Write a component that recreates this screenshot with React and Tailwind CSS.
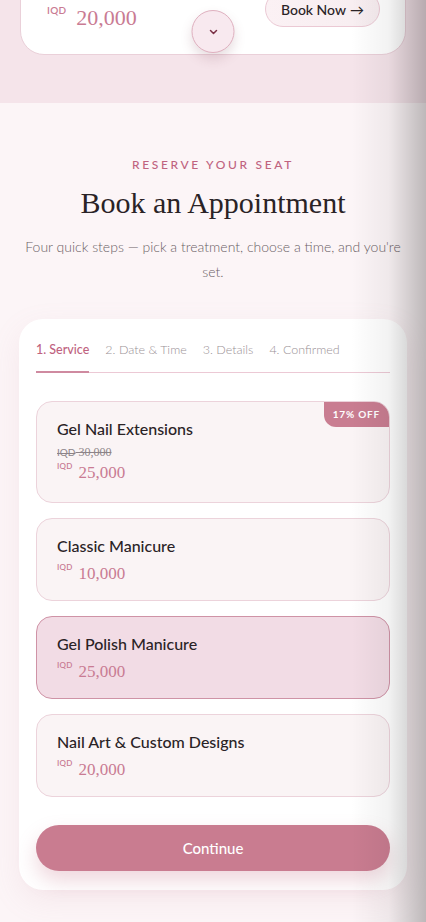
import { useState } from "react";

const services = [
  { name: "Gel Nail Extensions", price: "25,000", old: "30,000", badge: "17% OFF" },
  { name: "Classic Manicure", price: "10,000" },
  { name: "Gel Polish Manicure", price: "25,000" },
  { name: "Nail Art & Custom Designs", price: "20,000" },
];

const steps = ["1. Service", "2. Date & Time", "3. Details", "4. Confirmed"];

function Price({ value, big }) {
  return (
    <div className={`flex items-start text-[#c97b93] ${big ? "gap-[10px]" : "gap-[6px]"}`}>
      <span
        className={`${big ? "text-[10px] mt-[2px]" : "text-[8px] mt-[1px]"} font-semibold tracking-wide`}
        style={{ fontFamily: "Lato, sans-serif" }}
      >
        IQD
      </span>
      <span
        className={`${big ? "text-[22px] mt-[6px]" : "text-[17px] mt-[5px]"} leading-none`}
        style={{ fontFamily: '"Liberation Serif", serif' }}
      >
        {value}
      </span>
    </div>
  );
}

function ServiceCard({ item, selected, onClick }) {
  return (
    <button
      onClick={onClick}
      className={`relative w-full text-left rounded-[16px] border px-[20px] ${item.old ? "pt-[15px] pb-[21px]" : "pt-[15px] pb-[18px]"} ${
        selected ? "bg-[#f2dce5] border-[#cf93a6]" : "bg-[#faf4f5] border-[#ecd3db]"
      }`}
    >
      {item.badge && (
        <span className="absolute top-0 right-0 bg-[#c97d91] text-white text-[10px] font-bold tracking-[0.08em] px-[9px] py-[5px] rounded-bl-[12px] rounded-tr-[15px]">
          {item.badge}
        </span>
      )}
      <div className="text-[16px] font-medium text-[#2a2326]">{item.name}</div>
      {item.old && (
        <div className="text-[12px] text-[#8d8488] line-through mt-[2px]" style={{ fontFamily: '"Liberation Serif", serif' }}>
          <span className="text-[10px]" style={{ fontFamily: "Lato, sans-serif" }}>IQD</span> 30,000
        </div>
      )}
      <div className={item.old ? "mt-[-2px]" : "mt-[2px]"}>
        <Price value={item.price} />
      </div>
    </button>
  );
}

export default function App() {
  const [selected, setSelected] = useState(2);
  const [step, setStep] = useState(0);

  return (
    <div className="relative h-[922px] overflow-hidden bg-[#fcf5f7]" style={{ fontFamily: "Lato, sans-serif" }}>
      {/* previous section tail */}
      <div className="bg-[#f5e4ea] pb-[48px] px-[20px]">
        <div className="relative mt-[-60px] h-[115px] rounded-[24px] bg-white border border-[#ead0d9] flex justify-between items-end px-[26px] pb-[28px]">
          <div className="mb-[-3px]">
            <Price value="20,000" big />
          </div>
          <button className="mr-[-1px] mb-[-1px] h-[36px] px-[15px] rounded-full border border-[#ebc9d4] bg-gradient-to-r from-[#fbf1f4] to-[#f7edf0] text-[14px] font-medium text-[#2a2326] flex items-center gap-[4px]">
            Book Now <span className="text-[14px]">→</span>
          </button>
          <button className="absolute left-1/2 -translate-x-1/2 bottom-[1px] w-[43px] h-[43px] rounded-full bg-[#f8e9ef] border border-[#dfb0bf] shadow-[0_6px_12px_rgba(120,60,80,0.18)] flex items-center justify-center">
            <svg width="12" height="12" viewBox="0 0 24 24" fill="none" stroke="#7a2f45" strokeWidth="3" strokeLinecap="round" strokeLinejoin="round">
              <path d="M6 9l6 6 6-6" />
            </svg>
          </button>
        </div>
      </div>

      {/* booking */}
      <section className="px-[19px] pt-[53px]">
        <div className="text-center">
          <div className="text-[12px] tracking-[0.22em] text-[#c0637f] font-medium">RESERVE YOUR SEAT</div>
          <h2 className="mt-[10px] text-[30px] leading-[38px] text-[#2a2326]" style={{ fontFamily: '"Liberation Serif", serif' }}>
            Book an Appointment
          </h2>
          <p className="mt-[12px] text-[14px] leading-[25px] font-light text-[#6b6166] px-[4px]">
            Four quick steps — pick a treatment, choose a time, and you're set.
          </p>
        </div>

        <div className="mt-[35px] bg-white rounded-[24px] shadow-[0_10px_30px_rgba(200,140,160,0.12)] px-[17px] pt-[22px] pb-[19px]">
          <div className="flex gap-[16px] border-b border-[#ecc9d5]">
            {steps.map((s, i) => (
              <button
                key={s}
                onClick={() => setStep(i)}
                className={`pb-[11px] text-[12.5px] border-b-2 -mb-px ${
                  i === step ? "text-[#c0637f] font-medium border-[#cf8aa0]" : "text-[#9a9196] font-light border-transparent"
                }`}
              >
                {s}
              </button>
            ))}
          </div>

          <div className="mt-[28px] flex flex-col gap-[15px]">
            {services.map((s, i) => (
              <ServiceCard key={s.name} item={s} selected={selected === i} onClick={() => setSelected(i)} />
            ))}
          </div>

          <button className="mt-[28px] w-full h-[46px] rounded-full bg-[#c97c90] text-white text-[15px] font-medium shadow-[0_10px_20px_rgba(201,124,144,0.3)]">
            Continue
          </button>
        </div>
      </section>

      {/* edge shade from drawer */}
      <div className="pointer-events-none absolute inset-y-0 right-0 w-[75px] bg-gradient-to-r from-transparent via-black/5 to-black/25" />
    </div>
  );
}
